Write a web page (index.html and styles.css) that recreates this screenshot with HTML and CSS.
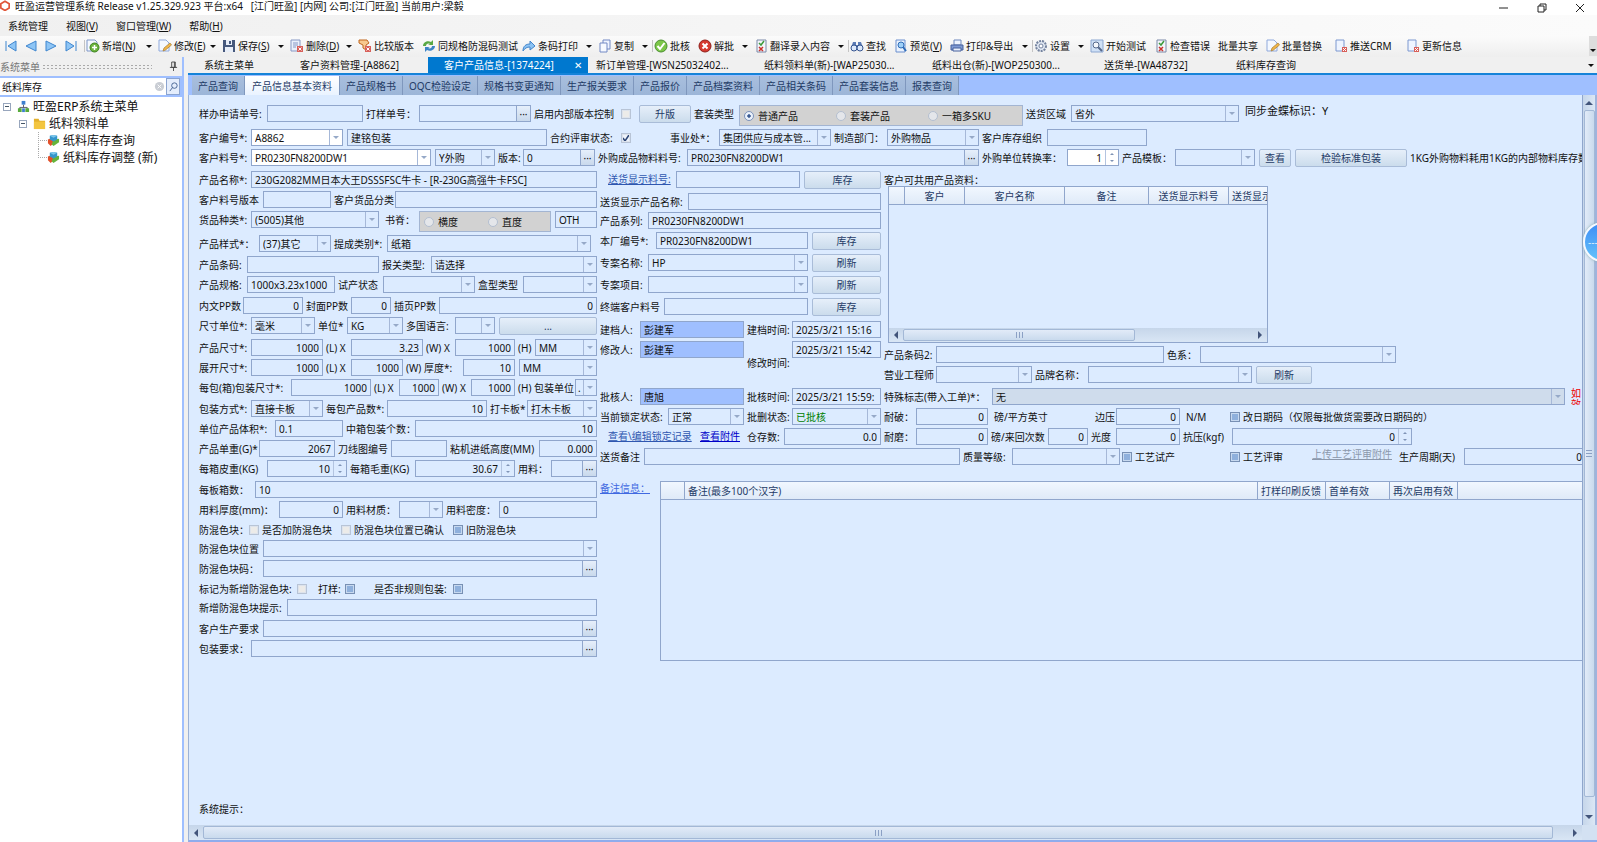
FILE: index.html
```
<!DOCTYPE html>
<html lang="zh-CN">
<head>
  <meta charset="UTF-8">
  <title>旺盈运营管理系统</title>
  <link rel="stylesheet" href="styles.css">
</head>
<body>
  <!-- 图标 -->
  <svg class="defs" aria-hidden="true">
    <symbol id="i-first" viewBox="0 0 14 14"><path d="M2 2v10M12 2v10L4 7z" fill="#8ec5f5" stroke="#3f86cf"/></symbol>
    <symbol id="i-prev" viewBox="0 0 14 14"><path d="M12 2v10L2 7z" fill="#8ec5f5" stroke="#3f86cf"/></symbol>
    <symbol id="i-next" viewBox="0 0 14 14"><path d="M2 2v10l10-5z" fill="#8ec5f5" stroke="#3f86cf"/></symbol>
    <symbol id="i-last" viewBox="0 0 14 14"><path d="M12 2v10M2 2v10l8-5z" fill="#8ec5f5" stroke="#3f86cf"/></symbol>
    <symbol id="i-add" viewBox="0 0 14 14"><path d="M1 1h8l2 2v9H1z" fill="#f4f8ff" stroke="#7e97c8"/><circle cx="8.500" cy="8.500" r="4.500" fill="#6cb33e" stroke="#3f8420"/><path d="M8.500 6v5M6 8.500h5" stroke="#fff" stroke-width="1.500"/></symbol>
    <symbol id="i-edit" viewBox="0 0 14 14"><path d="M1 1h7l3 3v8H1z" fill="#f4f8ff" stroke="#8fa9dc"/><path d="M5 12l1-3 6-5 1.500 2-6 5z" fill="#f0b64a" stroke="#a87c34" stroke-width=".7"/></symbol>
    <symbol id="i-save" viewBox="0 0 14 14"><path d="M1 1h12v12H1z" fill="#46587c"/><path d="M4 1h6v5H4zM3 8h8v5H3z" fill="#e8eef8"/><path d="M7 2h2v3H7z" fill="#46587c"/></symbol>
    <symbol id="i-del" viewBox="0 0 14 14"><path d="M1 1h9v11H1z" fill="#eaf0fb" stroke="#8798c4"/><path d="M3 4h5M3 6h5M3 8h3" stroke="#8798c4"/><path d="M7 7h6v6H7z" fill="#d8605a"/><path d="M8.500 8.500l3 3m0-3l-3 3" stroke="#fff"/></symbol>
    <symbol id="i-compare" viewBox="0 0 14 14"><path d="M1 1h8l2 3-3 2v5L5 9V6L1 4z" fill="#f7c98e" stroke="#c0661f"/><path d="M7 7h6v6H7z" fill="#d8605a"/><path d="M8.500 8.500l3 3m0-3l-3 3" stroke="#fff"/></symbol>
    <symbol id="i-sync" viewBox="0 0 14 14"><path d="M1 7c0-4 5-6 8-4l2-2v5H6l2-1C6 4 4 5 4 7z" fill="#5aa845"/><path d="M13 7c0 4-5 6-8 4l-2 2V8h5L6 9c2 1 4 0 4-2z" fill="#3d84c6"/></symbol>
    <symbol id="i-share" viewBox="0 0 14 14"><path d="M1 12c0-5 3-7 7-7V2l5 5-5 4V8c-3 0-5 1-7 4z" fill="#8cc3f4" stroke="#4284c9"/></symbol>
    <symbol id="i-copy" viewBox="0 0 14 14"><path d="M5 1h7v9H5z" fill="#eef3ff" stroke="#7289c4"/><path d="M2 4h7v9H2z" fill="#f6f9ff" stroke="#7289c4"/></symbol>
    <symbol id="i-ok" viewBox="0 0 14 14"><circle cx="7" cy="7" r="6" fill="#7cc648" stroke="#4a8f30"/><path d="M3.500 7l2.500 3 4.500-6" fill="none" stroke="#fff" stroke-width="2"/></symbol>
    <symbol id="i-no" viewBox="0 0 14 14"><circle cx="7" cy="7" r="6" fill="#d63a2f" stroke="#8f1f1a"/><path d="M4.500 4.500l5 5m0-5l-5 5" stroke="#fff" stroke-width="2"/></symbol>
    <symbol id="i-check" viewBox="0 0 14 14"><path d="M3 1h9v12H3z" fill="#f4f6fb" stroke="#7b89a8"/><path d="M5 4l2 2 3-4" fill="none" stroke="#3d9a3b" stroke-width="1.500"/><path d="M5 8l4 4m0-4l-4 4" stroke="#c8322c" stroke-width="1.500"/></symbol>
    <symbol id="i-find" viewBox="0 0 14 14"><path d="M3 3h3v3h2V3h3l2 6H1z" fill="#5b7bb5"/><circle cx="4" cy="9" r="3" fill="#dde9fb" stroke="#35548f"/><circle cx="10" cy="9" r="3" fill="#dde9fb" stroke="#35548f"/></symbol>
    <symbol id="i-view" viewBox="0 0 14 14"><path d="M2 1h9v12H2z" fill="#eaf2fe" stroke="#6a8fce"/><circle cx="7" cy="6" r="3" fill="#9fd0f8" stroke="#2f6db8"/><path d="M9 8l3 4" stroke="#2f6db8" stroke-width="2"/></symbol>
    <symbol id="i-print" viewBox="0 0 14 14"><path d="M4 1h7v5H4z" fill="#eef4ff" stroke="#6d87bd"/><path d="M1 6h12v5H1z" fill="#7f9ad4" stroke="#47619d"/><path d="M3 9h8v3H3z" fill="#e7eefb" stroke="#47619d"/></symbol>
    <symbol id="i-gear" viewBox="0 0 14 14"><circle cx="7" cy="7" r="5" fill="#dfe6f2" stroke="#74839f" stroke-width="2" stroke-dasharray="2 1"/><circle cx="7" cy="7" r="2" fill="#fff" stroke="#74839f"/></symbol>
    <symbol id="i-tool" viewBox="0 0 14 14"><path d="M1 1h12v12H1z" fill="#cfe0f6" stroke="#8ba6d0"/><path d="M12 12L7 7" stroke="#55688c" stroke-width="2"/><circle cx="6" cy="6" r="3" fill="#f4f7fc" stroke="#55688c"/></symbol>
    <symbol id="i-push" viewBox="0 0 14 14"><path d="M2 1h8v11H2z" fill="#eef4ff" stroke="#7d98d0"/><path d="M8 8h5v5H8z" fill="#d8605a"/><path d="M9 9l3 3m0-3l-3 3" stroke="#fff"/></symbol>
    <symbol id="i-cube" viewBox="0 0 14 14"><path d="M1 6l5-2 2 5-4 4-3-3z" fill="#e2502a"/><path d="M7 6l6-1v4l-6 4-2-2z" fill="#66b33a"/><path d="M3 2l4-1 4 1v4L7 8 3 6z" fill="#3596cc"/><path d="M3 2l4-1 4 1-4 2z" fill="#7cc6ea"/></symbol>
  </svg>

  <div class="titlebar">
    <svg class="logo" viewBox="0 0 12 12"><path d="M6 1l5 3v5l-5 3-5-3V4z" fill="none" stroke="#e0563a" stroke-width="2"/></svg>
    <span>旺盈运营管理系统 Release v1.25.329.923 平台:x64 &nbsp; [江门旺盈] [内网] 公司:[江门旺盈] 当前用户:梁毅</span>
    <div class="winbtns">
      <button aria-label="最小化"><svg viewBox="0 0 10 10"><path d="M0 5h9"/></svg></button>
      <button aria-label="还原"><svg viewBox="0 0 10 10"><path d="M1 3h6v6H1zM3 3V1h6v6H7"/></svg></button>
      <button aria-label="关闭"><svg viewBox="0 0 10 10"><path d="M1 1l8 8M9 1L1 9"/></svg></button>
    </div>
  </div>

  <nav class="menubar">
    <a href="#">系统管理</a>
    <a href="#">视图(<u>V</u>)</a>
    <a href="#">窗口管理(<u>W</u>)</a>
    <a href="#">帮助(<u>H</u>)</a>
  </nav>

  <div class="toolbar">
    <button class="nav" aria-label="第一条"><svg><use href="#i-first"/></svg></button>
    <button class="nav" aria-label="上一条"><svg><use href="#i-prev"/></svg></button>
    <button class="nav" aria-label="下一条"><svg><use href="#i-next"/></svg></button>
    <button class="nav" aria-label="最后一条"><svg><use href="#i-last"/></svg></button>
    <button class="sep w72"><svg><use href="#i-add"/></svg>新增(<u>N</u>)<i class="arr"></i></button>
    <button class="w64"><svg><use href="#i-edit"/></svg>修改(<u>E</u>)<i class="arr"></i></button>
    <button class="w68"><svg><use href="#i-save"/></svg>保存(<u>S</u>)<i class="arr"></i></button>
    <button class="w68"><svg><use href="#i-del"/></svg>删除(<u>D</u>)<i class="arr"></i></button>
    <button class="w64"><svg><use href="#i-compare"/></svg>比较版本</button>
    <button class="w100"><svg><use href="#i-sync"/></svg>同规格防混码测试</button>
    <button class="w76"><svg><use href="#i-share"/></svg>条码打印<i class="arr"></i></button>
    <button class="w56"><svg><use href="#i-copy"/></svg>复制<i class="arr"></i></button>
    <button class="sep w44"><svg><use href="#i-ok"/></svg>批核</button>
    <button class="w56"><svg><use href="#i-no"/></svg>解批<i class="arr"></i></button>
    <button class="w96"><svg><use href="#i-check"/></svg>翻译录入内容<i class="arr"></i></button>
    <button class="sep w44"><svg><use href="#i-find"/></svg>查找</button>
    <button class="w56"><svg><use href="#i-view"/></svg>预览(<u>V</u>)</button>
    <button class="w84"><svg><use href="#i-print"/></svg>打印&amp;导出<i class="arr"></i></button>
    <button class="sep w56"><svg><use href="#i-gear"/></svg>设置<i class="arr"></i></button>
    <button class="w64"><svg><use href="#i-tool"/></svg>开始测试</button>
    <button class="w64"><svg><use href="#i-check"/></svg>检查错误</button>
    <button class="w48">批量共享</button>
    <button class="w68"><svg><use href="#i-edit"/></svg>批量替换</button>
    <button class="w72"><svg><use href="#i-push"/></svg>推送CRM</button>
    <button class="w72"><svg><use href="#i-push"/></svg>更新信息</button>
    <button class="more" aria-label="更多"><i class="arr"></i></button>
  </div>

  <div class="body">
    <aside class="sidebar">
      <div class="side-head"><span>系统菜单</span><i class="dots"></i>
        <svg viewBox="0 0 10 12"><path d="M3 1h4v6H3zM1 7h8M5 7v4M6 1v6" fill="none" stroke="#444"/></svg>
      </div>
      <div class="search">
        <input type="text" value="纸料库存" aria-label="搜索菜单">
        <button aria-label="清除"><svg viewBox="0 0 12 12"><circle cx="6" cy="6" r="5" fill="#c9cdd4"/><path d="M4 4l4 4m0-4L4 8" stroke="#fff"/></svg></button>
        <button class="go" aria-label="查找"><svg viewBox="0 0 12 12"><circle cx="7" cy="5" r="3" fill="none" stroke="#43608f"/><path d="M5 7l-3 4" stroke="#43608f"/></svg></button>
      </div>
      <ul class="tree">
        <li><i class="box"></i><svg viewBox="0 0 14 14"><path d="M7 5v3M3 10V8h8v2" fill="none" stroke="#556"/><path d="M5 1h4v4H5z" fill="#3d7fd0"/><path d="M1 9h4v4H1zM9 9h4v4H9z" fill="#58ab3c"/><path d="M5.500 9h3v4h-3z" fill="#3d7fd0"/></svg>旺盈ERP系统主菜单</li>
        <li class="l2"><i class="box"></i><svg viewBox="0 0 14 14"><path d="M1 2h5l1 2h6v9H1z" fill="#e3b02c"/><path d="M1 5h12v8H1z" fill="#f3c53f"/></svg>纸料领料单</li>
        <li class="l3"><i class="branch"></i><svg><use href="#i-cube"/></svg>纸料库存查询</li>
        <li class="l3"><i class="branch end"></i><svg><use href="#i-cube"/></svg>纸料库存调整 (新)</li>
      </ul>
    </aside>

    <main class="work">
      <div class="doctabs">
        <button class="w96">系统主菜单</button>
        <button class="w144">客户资料管理-[A8862]</button>
        <button class="w160 on">客户产品信息-[1374224]<span>✕</span></button>
        <button class="w160 near">新订单管理-[WSN25032402...</button>
        <button class="w168">纸料领料单(新)-[WAP25030...</button>
        <button class="w172">纸料出仓(新)-[WOP250300...</button>
        <button class="w132">送货单-[WA48732]</button>
        <button class="w100">纸料库存查询</button>
        <i class="arr"></i>
      </div>
      <div class="subtabs">
        <button>产品查询</button>
        <button class="on">产品信息基本资料</button>
        <button>产品规格书</button>
        <button>OQC检验设定</button>
        <button>规格书变更通知</button>
        <button>生产报关要求</button>
        <button>产品报价</button>
        <button>产品档案资料</button>
        <button>产品相关条码</button>
        <button>产品套装信息</button>
        <button>报表查询</button>
      </div>

      <div class="panel">
        <form class="form">
          <div class="head">
            <div class="row">
              <label class="w68" for="apply">样办申请单号:</label><input id="apply" class="w96">
              <label class="w56" for="sample">打样单号：</label><span class="pick w112"><input id="sample"><button type="button">···</button></span>
              <label class="w88" for="inner">启用内部版本控制</label><span class="tick w20"><input type="checkbox" id="inner"></span>
              <button type="button" class="btn w52">升版</button>
              <span class="lbl w48">套装类型</span>
              <div class="group w284">
                <label class="w92"><input type="radio" name="suit" checked>普通产品</label>
                <label class="w92"><input type="radio" name="suit">套装产品</label>
                <label><input type="radio" name="suit">一箱多SKU</label>
              </div>
              <label class="w48" for="area">送货区域</label><select id="area" class="w168"><option>省外</option></select>
              <span class="sync">同步金蝶标识：Y</span>
            </div>
            <div class="row">
              <label class="w52" for="cust">客户编号*:</label><select id="cust" class="w92 edit"><option>A8862</option></select>
              <input class="w200 ml" value="建铭包装" aria-label="客户名称">
              <label class="w72" for="contract">合约评审状态:</label><span class="tick w48"><input type="checkbox" id="contract" checked></span>
              <label class="w52" for="dept">事业处*：</label><select id="dept" class="w112"><option>集团供应与成本管...</option></select>
              <label class="w56" for="make">制造部门：</label><select id="make" class="w92"><option>外购物品</option></select>
              <label class="w68" for="org">客户库存组织</label><input id="org" class="w100">
            </div>
            <div class="row">
              <label class="w52" for="pn">客户料号*:</label><select id="pn" class="w180 edit"><option>PR0230FN8200DW1</option></select>
              <select class="w60 ml" aria-label="外购"><option>Y外购</option></select>
              <label class="w28" for="ver">版本:</label><span class="pick w72"><input id="ver" value="0"><button type="button">···</button></span>
              <label class="w92" for="outpn">外购成品物料料号:</label><span class="pick w292"><input id="outpn" value="PR0230FN8200DW1"><button type="button">···</button></span>
              <label class="w88" for="rate">外购单位转换率：</label><input id="rate" class="w52 num spin white" value="1">
              <label class="w56" for="tpl">产品模板：</label><select id="tpl" class="w80"><option></option></select>
              <button type="button" class="btn w32 ml">查看</button>
              <button type="button" class="btn w112 ml">检验标准包装</button>
              <span class="lbl">1KG外购物料耗用1KG的内部物料库存数</span>
            </div>
          </div>

          <div class="cols">
            <div class="left">
              <div class="row"><label class="w52" for="name">产品名称*:</label><input id="name" class="grow" value="230G2082MM日本大王DSSSFSC牛卡 - [R-230G高强牛卡FSC]"></div>
              <div class="row"><label class="w64" for="pnver">客户料号版本</label><input id="pnver" class="w68"><label class="w64" for="pcat">客户货品分类</label><input id="pcat" class="grow"></div>
              <div class="row">
                <label class="w52" for="kind">货品种类*:</label><select id="kind" class="w128"><option>(5005)其他</option></select>
                <span class="lbl w36 right">书脊：</span>
                <div class="group w132 ml"><label class="w64"><input type="radio" name="spine">横度</label><label><input type="radio" name="spine">直度</label></div>
                <input class="grow ml" value="OTH" aria-label="其他">
              </div>
              <div class="row"><label class="w60" for="style">产品样式*：</label><select id="style" class="w72"><option>(37)其它</option></select><label class="w56" for="comm">提成类别*:</label><select id="comm" class="w204"><option>纸箱</option></select></div>
              <div class="row"><label class="w48" for="bar">产品条码:</label><input id="bar" class="w132"><label class="w52" for="customs">报关类型:</label><select id="customs" class="grow"><option>请选择</option></select></div>
              <div class="row"><label class="w48" for="spec">产品规格:</label><input id="spec" class="w88" value="1000x3.23x1000"><label class="w48" for="trial">试产状态</label><select id="trial" class="w92"><option></option></select><label class="w48" for="boxtype">盒型类型</label><select id="boxtype" class="grow"><option></option></select></div>
              <div class="row"><label class="w44" for="pp1">内文PP数</label><input id="pp1" class="w60 num" value="0"><label class="w48" for="pp2">封面PP数</label><input id="pp2" class="w40 num" value="0"><label class="w48" for="pp3">插页PP数</label><input id="pp3" class="grow num" value="0"></div>
              <div class="row"><label class="w52" for="sunit">尺寸单位*:</label><select id="sunit" class="w64"><option>毫米</option></select><label class="w32" for="unit">单位*</label><select id="unit" class="w56"><option>KG</option></select><label class="w52" for="lang">多国语言:</label><select id="lang" class="w40"><option></option></select><button type="button" class="btn grow ml">...</button></div>
              <div class="row"><label class="w52" for="len">产品尺寸*:</label><input id="len" class="w72 num" value="1000"><label class="w28" for="wid">(L) X</label><input id="wid" class="w72 num" value="3.23"><label class="w32" for="hei">(W) X</label><input id="hei" class="w60 num" value="1000"><label class="w20" for="mm1">(H)</label><select id="mm1" class="grow"><option>MM</option></select></div>
              <div class="row"><label class="w52" for="olen">展开尺寸*:</label><input id="olen" class="w72 num" value="1000"><label class="w28" for="owid">(L) X</label><input id="owid" class="w52 num" value="1000"><label class="w60" for="thick">(W) 厚度*:</label><input id="thick" class="w52 num" value="10"><select class="grow ml" aria-label="厚度单位"><option>MM</option></select></div>
              <div class="row"><label class="w92" for="plen">每包(箱)包装尺寸*:</label><input id="plen" class="w80 num" value="1000"><label class="w28" for="pwid">(L) X</label><input id="pwid" class="w40 num" value="1000"><label class="w32" for="phei">(W) X</label><input id="phei" class="w44 num" value="1000"><label class="w60" for="punit">(H) 包装单位</label><select id="punit" class="grow tiny"><option>.</option></select></div>
              <div class="row"><label class="w52" for="pack">包装方式*:</label><select id="pack" class="w72"><option>直接卡板</option></select><label class="w64" for="per">每包产品数*:</label><input id="per" class="w100 num" value="10"><label class="w40" for="pallet">打卡板*</label><select id="pallet" class="grow"><option>打木卡板</option></select></div>
              <div class="row"><label class="w76" for="vol">单位产品体积*:</label><input id="vol" class="w68" value="0.1"><label class="w72" for="mid">中箱包装个数：</label><input id="mid" class="grow num" value="10"></div>
              <div class="row"><label class="w60" for="weight">产品单重(G)*</label><input id="weight" class="w76 num" value="2067"><label class="w56" for="knife">刀线图编号</label><input id="knife" class="w56"><label class="w92" for="feed">粘机进纸高度(MM)</label><input id="feed" class="grow num" value="0.000"></div>
              <div class="row"><label class="w68" for="tare">每箱皮重(KG)</label><input id="tare" class="w80 num spin" value="10"><label class="w68" for="gross">每箱毛重(KG)</label><input id="gross" class="w100 num spin" value="30.67"><label class="w36" for="mat">用料：</label><span class="pick grow"><input id="mat"><button type="button">···</button></span></div>
              <div class="row"><label class="w56" for="board">每板箱数：</label><input id="board" class="grow" value="10"></div>
              <div class="row"><label class="w80" for="mthick">用料厚度(mm)：</label><input id="mthick" class="w64 num" value="0"><label class="w56" for="mtype">用料材质：</label><select id="mtype" class="w44"><option></option></select><label class="w56" for="dens">用料密度：</label><input id="dens" class="grow" value="0"></div>
              <div class="row"><span class="lbl w48">防混色块：</span><label class="chk w92"><input type="checkbox">是否加防混色块</label><label class="chk w112"><input type="checkbox">防混色块位置已确认</label><label class="chk"><input type="checkbox" class="mixed">旧防混色块</label></div>
              <div class="row"><label class="w64" for="cpos">防混色块位置</label><select id="cpos" class="grow"><option></option></select></div>
              <div class="row"><label class="w64" for="ccode">防混色块码：</label><span class="pick grow"><input id="ccode"><button type="button">···</button></span></div>
              <div class="row"><label class="w96" for="mark">标记为新增防混色块:</label><span class="tick w20"><input type="checkbox" id="mark"></span><label class="w28" for="proof">打样:</label><span class="tick w28"><input type="checkbox" id="proof" class="mixed"></span><label class="w80" for="irr">是否非规则包装:</label><span class="tick w20"><input type="checkbox" id="irr" class="mixed"></span></div>
              <div class="row"><label class="w88" for="ctip">新增防混色块提示:</label><input id="ctip" class="grow"></div>
              <div class="row"><label class="w64" for="creq">客户生产要求</label><span class="pick grow"><input id="creq"><button type="button">···</button></span></div>
              <div class="row"><label class="w52" for="preq">包装要求：</label><span class="pick grow"><input id="preq"><button type="button">···</button></span></div>
            </div>

            <div class="rest">
              <div class="upper">
                <div class="mid">
                  <div class="row"><a class="lnk w76 in" href="#">送货显示料号:</a><input class="w124" aria-label="送货显示料号"><button type="button" class="btn grow ml">库存</button></div>
                  <div class="row"><label class="w88" for="dname">送货显示产品名称:</label><input id="dname" class="grow"></div>
                  <div class="row"><label class="w48" for="series">产品系列:</label><input id="series" class="grow" value="PR0230FN8200DW1"></div>
                  <div class="row"><label class="w56" for="fno">本厂编号*:</label><input id="fno" class="w152" value="PR0230FN8200DW1"><button type="button" class="btn grow ml">库存</button></div>
                  <div class="row"><label class="w48" for="proj">专案名称:</label><select id="proj" class="w160"><option>HP</option></select><button type="button" class="btn grow ml">刷新</button></div>
                  <div class="row"><label class="w48" for="item">专案项目:</label><select id="item" class="w160"><option></option></select><button type="button" class="btn grow ml">刷新</button></div>
                  <div class="row"><label class="w64" for="endpn">终端客户料号</label><input id="endpn" class="w144"><button type="button" class="btn grow ml">库存</button></div>
                  <div class="row"><label class="w40" for="cby">建档人:</label><input id="cby" class="w104 blue" value="彭建军"><label class="w48" for="cat">建档时间:</label><input id="cat" class="grow" value="2025/3/21 15:16"></div>
                  <div class="row"><label class="w40" for="mby">修改人:</label><input id="mby" class="w104 blue" value="彭建军"><label class="w48 low" for="mat2">修改时间:</label><input id="mat2" class="grow" value="2025/3/21 15:42"></div>
                  <div class="row"><label class="w40" for="aby">批核人:</label><input id="aby" class="w104 blue" value="唐旭"><label class="w48" for="aat">批核时间:</label><input id="aat" class="grow" value="2025/3/21 15:59:"></div>
                  <div class="row"><label class="w68" for="lock">当前锁定状态:</label><select id="lock" class="w76"><option>正常</option></select><label class="w48" for="ast">批删状态:</label><select id="ast" class="grow green"><option>已批核</option></select></div>
                  <div class="row"><a class="lnk w100 in" href="#">查看\编辑锁定记录</a><a class="lnk w44 strong" href="#">查看附件</a><label class="w40" for="stock">仓存数:</label><input id="stock" class="grow num" value="0.0"></div>
                </div>

                <div class="side">
                  <div class="row"><span class="lbl">客户可共用产品资料：</span></div>
                  <div class="shared">
                    <table>
                      <thead><tr><th class="w16"></th><th class="w60">客户</th><th class="w100">客户名称</th><th class="w84">备注</th><th class="w80">送货显示料号</th><th class="cut">送货显示</th></tr></thead>
                    </table>
                    <div class="hbar"><i class="tri l"></i><i class="thumb"></i><i class="tri r"></i></div>
                  </div>
                  <div class="row"><label class="w52" for="bar2">产品条码2:</label><input id="bar2" class="w228"><label class="w36" for="color">色系：</label><select id="color" class="w196"><option></option></select></div>
                  <div class="row"><label class="w52" for="eng">营业工程师</label><select id="eng" class="w96"><option></option></select><label class="w56" for="brand">品牌名称：</label><select id="brand" class="w164"><option></option></select><button type="button" class="btn w56 ml">刷新</button></div>
                  <div class="row"><label class="w108" for="flag">特殊标志(带入工单)*：</label><select id="flag" class="grow gray"><option>无</option></select><span class="warn">如<br>效</span></div>
                  <div class="row"><label class="w32" for="burst">耐破：</label><input id="burst" class="w72 num" value="0"><span class="lbl w104 unit">磅/平方英寸</span><label class="w24" for="edge">边压</label><input id="edge" class="w64 num" value="0"><span class="lbl w48 unit">N/M</span><label class="chk"><input type="checkbox" class="mixed">改日期码（仅限每批做货需要改日期码的）</label></div>
                  <div class="row"><label class="w32" for="wear">耐磨：</label><input id="wear" class="w72 num" value="0"><label class="w60" for="times">磅/来回次数</label><input id="times" class="w40 num" value="0"><label class="w28" for="gloss">光度</label><input id="gloss" class="w64 num" value="0"><label class="w52" for="kgf">抗压(kgf)</label><input id="kgf" class="w180 num spin" value="0"></div>
                </div>
              </div>

              <div class="row remark"><label class="w44" for="rem">送货备注</label><input id="rem" class="w316"><label class="w52" for="grade">质量等级:</label><select id="grade" class="w108"><option></option></select><label class="chk w108"><input type="checkbox" class="mixed">工艺试产</label><label class="chk w84"><input type="checkbox" class="mixed">工艺评审</label><a class="lnk w84 off" href="#">上传工艺评审附件</a><label class="w68" for="cycle">生产周期(天)</label><input id="cycle" class="grow num over" value="0"></div>

              <div class="notes">
                <a class="lnk w60 pale" href="#">备注信息：</a>
                <div class="notegrid">
                  <table>
                    <thead><tr><th class="w24"></th><th class="l">备注(最多100个汉字)</th><th class="w68 l">打样印刷反馈</th><th class="w64 l">首单有效</th><th class="w68 l">再次启用有效</th><th class="w124"></th></tr></thead>
                  </table>
                </div>
              </div>
            </div>
          </div>
          <div class="hint">系统提示：</div>
        </form>
        <div class="vscroll"><i class="tri u"></i><i class="thumb"></i><i class="tri d"></i></div>
        <div class="hscroll"><i class="tri l"></i><i class="thumb"></i><i class="tri r"></i></div>
        <div class="corner"></div>
      </div>
    </main>
  </div>
  <button class="bubble" aria-label="悬浮工具">----</button>
</body>
</html>
```
FILE: styles.css
```
* { box-sizing: border-box; }
body {
  margin: 0;
  height: 100vh;
  display: flex;
  flex-direction: column;
  overflow: hidden;
  background: #f0f0f0;
  color: #111;
  font: 10px/14px "Noto Sans", "Noto Sans CJK SC", sans-serif;
}
button, input, select { font: inherit; color: inherit; margin: 0; }
button { border: 0; background: none; padding: 0; white-space: nowrap; }
.defs { position: absolute; width: 0; height: 0; }

/* widths on a 4px step */
.w16 { width: 16px; } .w20 { width: 20px; } .w24 { width: 24px; } .w28 { width: 28px; }
.w32 { width: 32px; } .w36 { width: 36px; } .w40 { width: 40px; } .w44 { width: 44px; }
.w48 { width: 48px; } .w52 { width: 52px; } .w56 { width: 56px; } .w60 { width: 60px; }
.w64 { width: 64px; } .w68 { width: 68px; } .w72 { width: 72px; } .w76 { width: 76px; }
.w80 { width: 80px; } .w84 { width: 84px; } .w88 { width: 88px; } .w92 { width: 92px; }
.w96 { width: 96px; } .w100 { width: 100px; } .w104 { width: 104px; } .w108 { width: 108px; }
.w112 { width: 112px; } .w124 { width: 124px; } .w128 { width: 128px; } .w132 { width: 132px; }
.w144 { width: 144px; } .w152 { width: 152px; } .w160 { width: 160px; } .w164 { width: 164px; }
.w168 { width: 168px; } .w172 { width: 172px; } .w180 { width: 180px; } .w196 { width: 196px; }
.w200 { width: 200px; } .w204 { width: 204px; } .w228 { width: 228px; } .w284 { width: 284px; }
.w292 { width: 292px; } .w316 { width: 316px; }

.titlebar {
  height: 15px;
  flex: none;
  display: flex;
  background: #fff;
  line-height: 12px;
}
.logo { width: 10px; height: 11px; margin-right: 5px; }
.winbtns { margin-left: auto; display: flex; gap: 28px; padding-right: 12px; }
.winbtns svg { width: 10px; height: 10px; fill: none; stroke: #222; display: block; }

.menubar {
  height: 21px;
  flex: none;
  display: flex;
  gap: 18px;
  padding: 4px 8px;
  background: linear-gradient(90deg, #f0f0f0, #fbfbfb);
}
.menubar a { color: #111; text-decoration: none; }

.toolbar {
  height: 21px;
  flex: none;
  display: flex;
  padding-left: 2px;
  background: linear-gradient(#fbfbfb, #eeeeee);
}
.toolbar button {
  flex: none;
  display: flex;
  align-items: center;
  height: 20px;
  padding: 0 4px 0 2px;
}
.toolbar svg { width: 14px; height: 14px; margin-right: 2px; flex: none; }
.toolbar .nav { width: 20px; }
.toolbar .sep { background: linear-gradient(#c4c4c4, #c4c4c4) 0 4px / 1px 12px no-repeat; }
.toolbar .nav + .sep { margin-left: 2px; }
.toolbar .more { margin-left: auto; padding: 0 1px; background: #ddd; align-items: flex-end; }
.arr {
  margin-left: auto;
  flex: none;
  border: 3px solid transparent;
  border-top-color: #111;
  border-bottom: 0;
}
.toolbar .more .arr { margin-bottom: 4px; }

.body { flex: 1; display: flex; min-height: 0; }
.sidebar {
  width: 184px;
  flex: none;
  display: flex;
  flex-direction: column;
  border-right: 2px solid #9fbfff;
  background: #fff;
}
.side-head {
  height: 19px;
  display: flex;
  align-items: center;
  background: #f0f0f0;
  color: #777;
}
.side-head svg { width: 9px; height: 11px; margin: 0 4px 0 auto; }
.dots {
  width: 110px;
  height: 6px;
  margin-left: 2px;
  background: radial-gradient(circle, #aaa 30%, transparent 40%) 0 0 / 4px 3px;
}
.search {
  height: 21px;
  display: flex;
  align-items: center;
  padding: 2px 2px 2px 0;
  background: #9fbfff;
}
.search input { flex: 1; min-width: 0; height: 17px; border: 0; padding: 0 2px; background: #fff; }
.search button { height: 17px; width: 14px; background: #fff; }
.search .go { background: #e4edfc; border: 1px solid #8ba4d0; }
.search svg { width: 11px; height: 11px; display: block; margin: auto; }
.tree { list-style: none; margin: 1px 0; padding: 0 0 0 3px; font-size: 12px; }
.tree li { height: 17px; display: flex; align-items: center; white-space: nowrap; }
.tree li svg { width: 13px; height: 13px; margin-right: 3px; }
.tree .l2 { padding-left: 16px; }
.tree .l3 { padding-left: 35px; }
.box {
  width: 8px;
  height: 8px;
  margin-right: 6px;
  border: 1px solid #98a6bd;
  background: linear-gradient(#456, #456) center / 4px 1px no-repeat;
}
.branch {
  width: 9px;
  height: 17px;
  background:
    repeating-linear-gradient(#aaa 0 1px, transparent 1px 2px) left top / 1px 100% no-repeat,
    repeating-linear-gradient(90deg, #aaa 0 1px, transparent 1px 2px) left center / 100% 1px no-repeat;
}
.branch.end { background-size: 1px 9px, 100% 1px; }

.work {
  flex: 1;
  min-width: 0;
  display: flex;
  flex-direction: column;
  margin-left: 4px;
}
.doctabs {
  height: 18px;
  flex: none;
  display: flex;
  align-items: center;
  border-bottom: 2px solid #1583d8;
  background: #f0f0f0;
}
.doctabs button { flex: none; height: 16px; padding-left: 16px; text-align: left; }
.doctabs .near { padding-left: 8px; }
.doctabs .on { background: #0078cf; color: #fff; display: flex; align-items: center; }
.doctabs .on span { margin: 0 6px 0 auto; }
.doctabs .arr { margin-right: 3px; }

.subtabs {
  height: 20px;
  flex: none;
  display: flex;
  padding: 1px 0 0 4px;
  background: #9fbfff;
}
.subtabs button {
  height: 19px;
  padding: 0 6px;
  border-right: 1px solid #7f97bd;
  background: linear-gradient(#a9bfdd, #9cb5d8);
  color: #1f3b66;
}
.subtabs .on { padding: 0 7px; background: linear-gradient(#ffffff, #eaf3ff); }

.panel {
  flex: 1;
  min-height: 0;
  display: grid;
  grid-template: 1fr 15px / 1fr 15px;
  border-left: 1px solid #9cb2d6;
  border-bottom: 2px solid #8facec;
  background: #dcebff;
}
.form {
  overflow: hidden;
  display: flex;
  flex-direction: column;
  padding: 10px 0 0 10px;
}
.head { display: grid; grid-template-rows: 24px 20px 22px; }
.row { display: flex; align-items: flex-start; min-width: 0; }
.row > * { flex: none; }
.row > .grow { flex: 1; min-width: 0; width: 0; }
.row > label, .lbl { padding-left: 3px; height: 17px; line-height: 18px; white-space: nowrap; }
.row > label:first-child, .lbl:first-child { padding-left: 0; }
.row > .ml { margin-left: 4px; }
.right { text-align: right; }

input, select {
  height: 17px;
  padding: 0 3px;
  border: 1px solid #90a6cc;
  border-radius: 0;
  background: #dcebff;
  outline: 0;
}
select {
  appearance: none;
  padding-right: 14px;
  background:
    url("data:image/svg+xml,%3Csvg xmlns='http://www.w3.org/2000/svg' viewBox='0 0 6 3'%3E%3Cpath d='M0 0h6L3 3z' fill='%2396a9c8'/%3E%3C/svg%3E") right 3px center / 6px 3px no-repeat,
    linear-gradient(#a6b8d8, #a6b8d8) right 12px top / 1px 100% no-repeat,
    #dcebff;
}
.edit { background-color: #fff; }
.gray { background-color: #cfdcec; }
.tiny { padding-left: 2px; padding-right: 13px; }
.green { color: #008000; }
.blue { background: #9fbfff; }
.num { text-align: right; }
.spin {
  padding-right: 16px;
  background:
    url("data:image/svg+xml,%3Csvg xmlns='http://www.w3.org/2000/svg' viewBox='0 0 4 9'%3E%3Cpath d='M0 2l2-2 2 2zM0 7l2 2 2-2z' fill='%237f93b6'/%3E%3C/svg%3E") right 4px center / 4px 9px no-repeat,
    linear-gradient(#b3c4e0, #b3c4e0) right 12px top / 1px 100% no-repeat,
    #dcebff;
}
.white { background-color: #fff; }

.pick { display: flex; height: 17px; }
.pick input { flex: 1; width: 0; min-width: 0; }
.pick button {
  width: 14px;
  border: 1px solid #90a6cc;
  border-left: 0;
  background: linear-gradient(#e6effb, #c9d9ec);
  line-height: 12px;
}

.btn {
  height: 18px;
  border: 1px solid #a9bcd8;
  border-radius: 2px;
  background: linear-gradient(#e6effa, #cbdcec);
  color: #1f3b66;
}

input[type="checkbox"] {
  appearance: none;
  width: 10px;
  height: 10px;
  padding: 0;
  border: 1px solid #b8c4d6;
  background: #ecebe9;
  box-shadow: inset 0 0 0 1px #dde3ec;
  flex: none;
}
input[type="checkbox"].mixed { background: #8fb0dc; border-color: #7890b4; box-shadow: inset 0 0 0 1px #c7d9f0; }
#contract { background: url("data:image/svg+xml,%3Csvg xmlns='http://www.w3.org/2000/svg' viewBox='0 0 8 8'%3E%3Cpath d='M1 4l2 3 4-6' fill='none' stroke='%232d4675' stroke-width='1.5'/%3E%3C/svg%3E") #eef3fb; }
.tick { display: flex; align-items: center; height: 17px; padding-left: 2px; }
.chk { display: flex; align-items: center; gap: 3px; }
.row > label.chk { padding-left: 2px; }
input[type="radio"] {
  appearance: none;
  width: 10px;
  height: 10px;
  padding: 0;
  border: 1px solid #b4bfd0;
  border-radius: 50%;
  background: #e4e6ea;
}
input[type="radio"]:checked { border-color: #7c93bb; background: radial-gradient(circle, #3a5a92 25%, #eaf1fb 35%); }
.group {
  display: flex;
  height: 21px;
  padding-left: 4px;
  border: 1px solid #a3b5d2;
  background: #d2d2d2;
}
.group label { display: flex; align-items: center; gap: 4px; white-space: nowrap; }
.sync { margin-left: 6px; font-size: 11px; line-height: 12px; }

.cols { display: flex; gap: 3px; }
.left {
  flex: none;
  width: 398px;
  display: grid;
  grid-template-rows: 20px 20px 24px 21px 20px 21px 20px 22px 20px 20px 21px 20px 20px 20px 21px 20px 20px 19px 20px 20px 19px 21px 20px 17px;
}
.rest { flex: 1; min-width: 0; }
.upper { display: flex; gap: 3px; }
.mid {
  flex: none;
  width: 281px;
  display: grid;
  grid-template-rows: 22px 19px 20px 22px 22px 22px 23px 20px 47px 20px 20px 20px;
}
.side {
  flex: 1;
  min-width: 0;
  display: grid;
  grid-template-rows: 15px 160px 20px 22px 20px 20px 20px;
}
.low { margin-top: 13px; }
.unit { padding-left: 6px; }
.over { margin-right: -4px; }
.warn { width: 11px; height: 17px; margin-left: 6px; overflow: hidden; color: #e00; line-height: 11px; }

.lnk { color: #2f57b0; line-height: 17px; white-space: nowrap; }
.lnk.in { padding-left: 8px; }
.strong { color: #0000c8; }
.off { color: #8b98ac; line-height: 13px; }
.pale { color: #4169e1; line-height: 14px; }

table { width: 100%; border-collapse: separate; border-spacing: 0; table-layout: fixed; }
th {
  height: 18px;
  padding: 0 3px;
  border-right: 1px solid #90a6cc;
  border-bottom: 1px solid #90a6cc;
  background: linear-gradient(#f1f7ff, #dfeaf8);
  color: #1f3b66;
  font-weight: normal;
  white-space: nowrap;
  overflow: hidden;
}
th:last-child { border-right: 0; }
th.l, th.cut { text-align: left; }
.shared {
  width: 380px;
  height: 157px;
  margin-left: 4px;
  display: flex;
  flex-direction: column;
  border: 1px solid #90a6cc;
}
.hbar, .hscroll {
  display: flex;
  align-items: center;
  background: linear-gradient(#c6d6ea, #d9e6f5);
}
.hbar { height: 14px; margin-top: auto; padding: 0 5px; }
.hbar .thumb { width: 232px; height: 12px; margin-left: 5px; }
.thumb {
  border: 1px solid #a3b8d6;
  border-radius: 2px;
  background:
    repeating-linear-gradient(90deg, #8ba0c4 0 1px, transparent 1px 3px) center / 7px 6px no-repeat,
    linear-gradient(#e2ebf8, #c9daed);
}
.tri { border: 4px solid transparent; flex: none; }
.tri.l { border-left: 0; border-right-color: #42547a; }
.tri.r { border-right: 0; border-left-color: #42547a; margin-left: auto; }
.tri.u { border-top: 0; border-bottom-color: #42547a; }
.tri.d { border-bottom: 0; border-top-color: #42547a; }

.remark { height: 33px; }
.notes { display: flex; }
.notegrid { flex: 1; min-width: 0; height: 180px; border: 1px solid #90a6cc; border-right: 0; }
.hint { margin: auto 0 9px; }

.vscroll {
  display: flex;
  flex-direction: column;
  align-items: center;
  padding: 6px 1px;
  border-left: 1px solid #90a6cc;
  border-right: 2px solid #9fb4dc;
  background: linear-gradient(90deg, #c6d6ea, #dbe7f5);
}
.vscroll .thumb {
  flex: 1;
  width: 11px;
  margin: 5px 0 18px;
  background:
    repeating-linear-gradient(#8ba0c4 0 1px, transparent 1px 3px) center / 6px 7px no-repeat,
    linear-gradient(90deg, #e2ebf8, #c9daed);
}
.hscroll { padding: 0 5px; }
.hscroll .thumb { flex: 1; height: 13px; margin: 0 20px 0 5px; }
.hscroll .tri.r { margin-left: 0; }
.corner { background: #d3e1f2; }

.bubble {
  position: absolute;
  top: 222px;
  right: -26px;
  width: 40px;
  height: 40px;
  border: 2px solid #f4f9ff;
  border-radius: 50%;
  background: linear-gradient(#3f8ef5, #62c2fb);
  box-shadow: 0 0 3px #8aa;
  color: #d9efff;
  text-align: left;
  padding-left: 3px;
}
```
